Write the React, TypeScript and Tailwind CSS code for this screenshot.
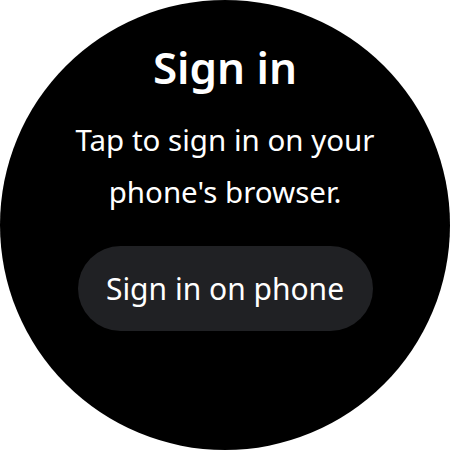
export default function App() {
  return (
    <div className="w-[450px] h-[450px] bg-white">
      <div
        className="w-[450px] h-[450px] rounded-full bg-black flex flex-col items-center text-white"
        style={{ fontFamily: '"Noto Sans", sans-serif' }}
      >
        <h1 className="mt-[37px] text-[44px] leading-[60px] font-semibold">Sign in</h1>
        <p className="mt-[17px] text-[29.5px] leading-[52px] text-center">
          Tap to sign in on your
          <br />
          phone's browser.
        </p>
        <button className="mt-[28px] w-[295px] h-[85px] rounded-full bg-[#202124] text-[30px] text-white">
          Sign in on phone
        </button>
      </div>
    </div>
  );
}
